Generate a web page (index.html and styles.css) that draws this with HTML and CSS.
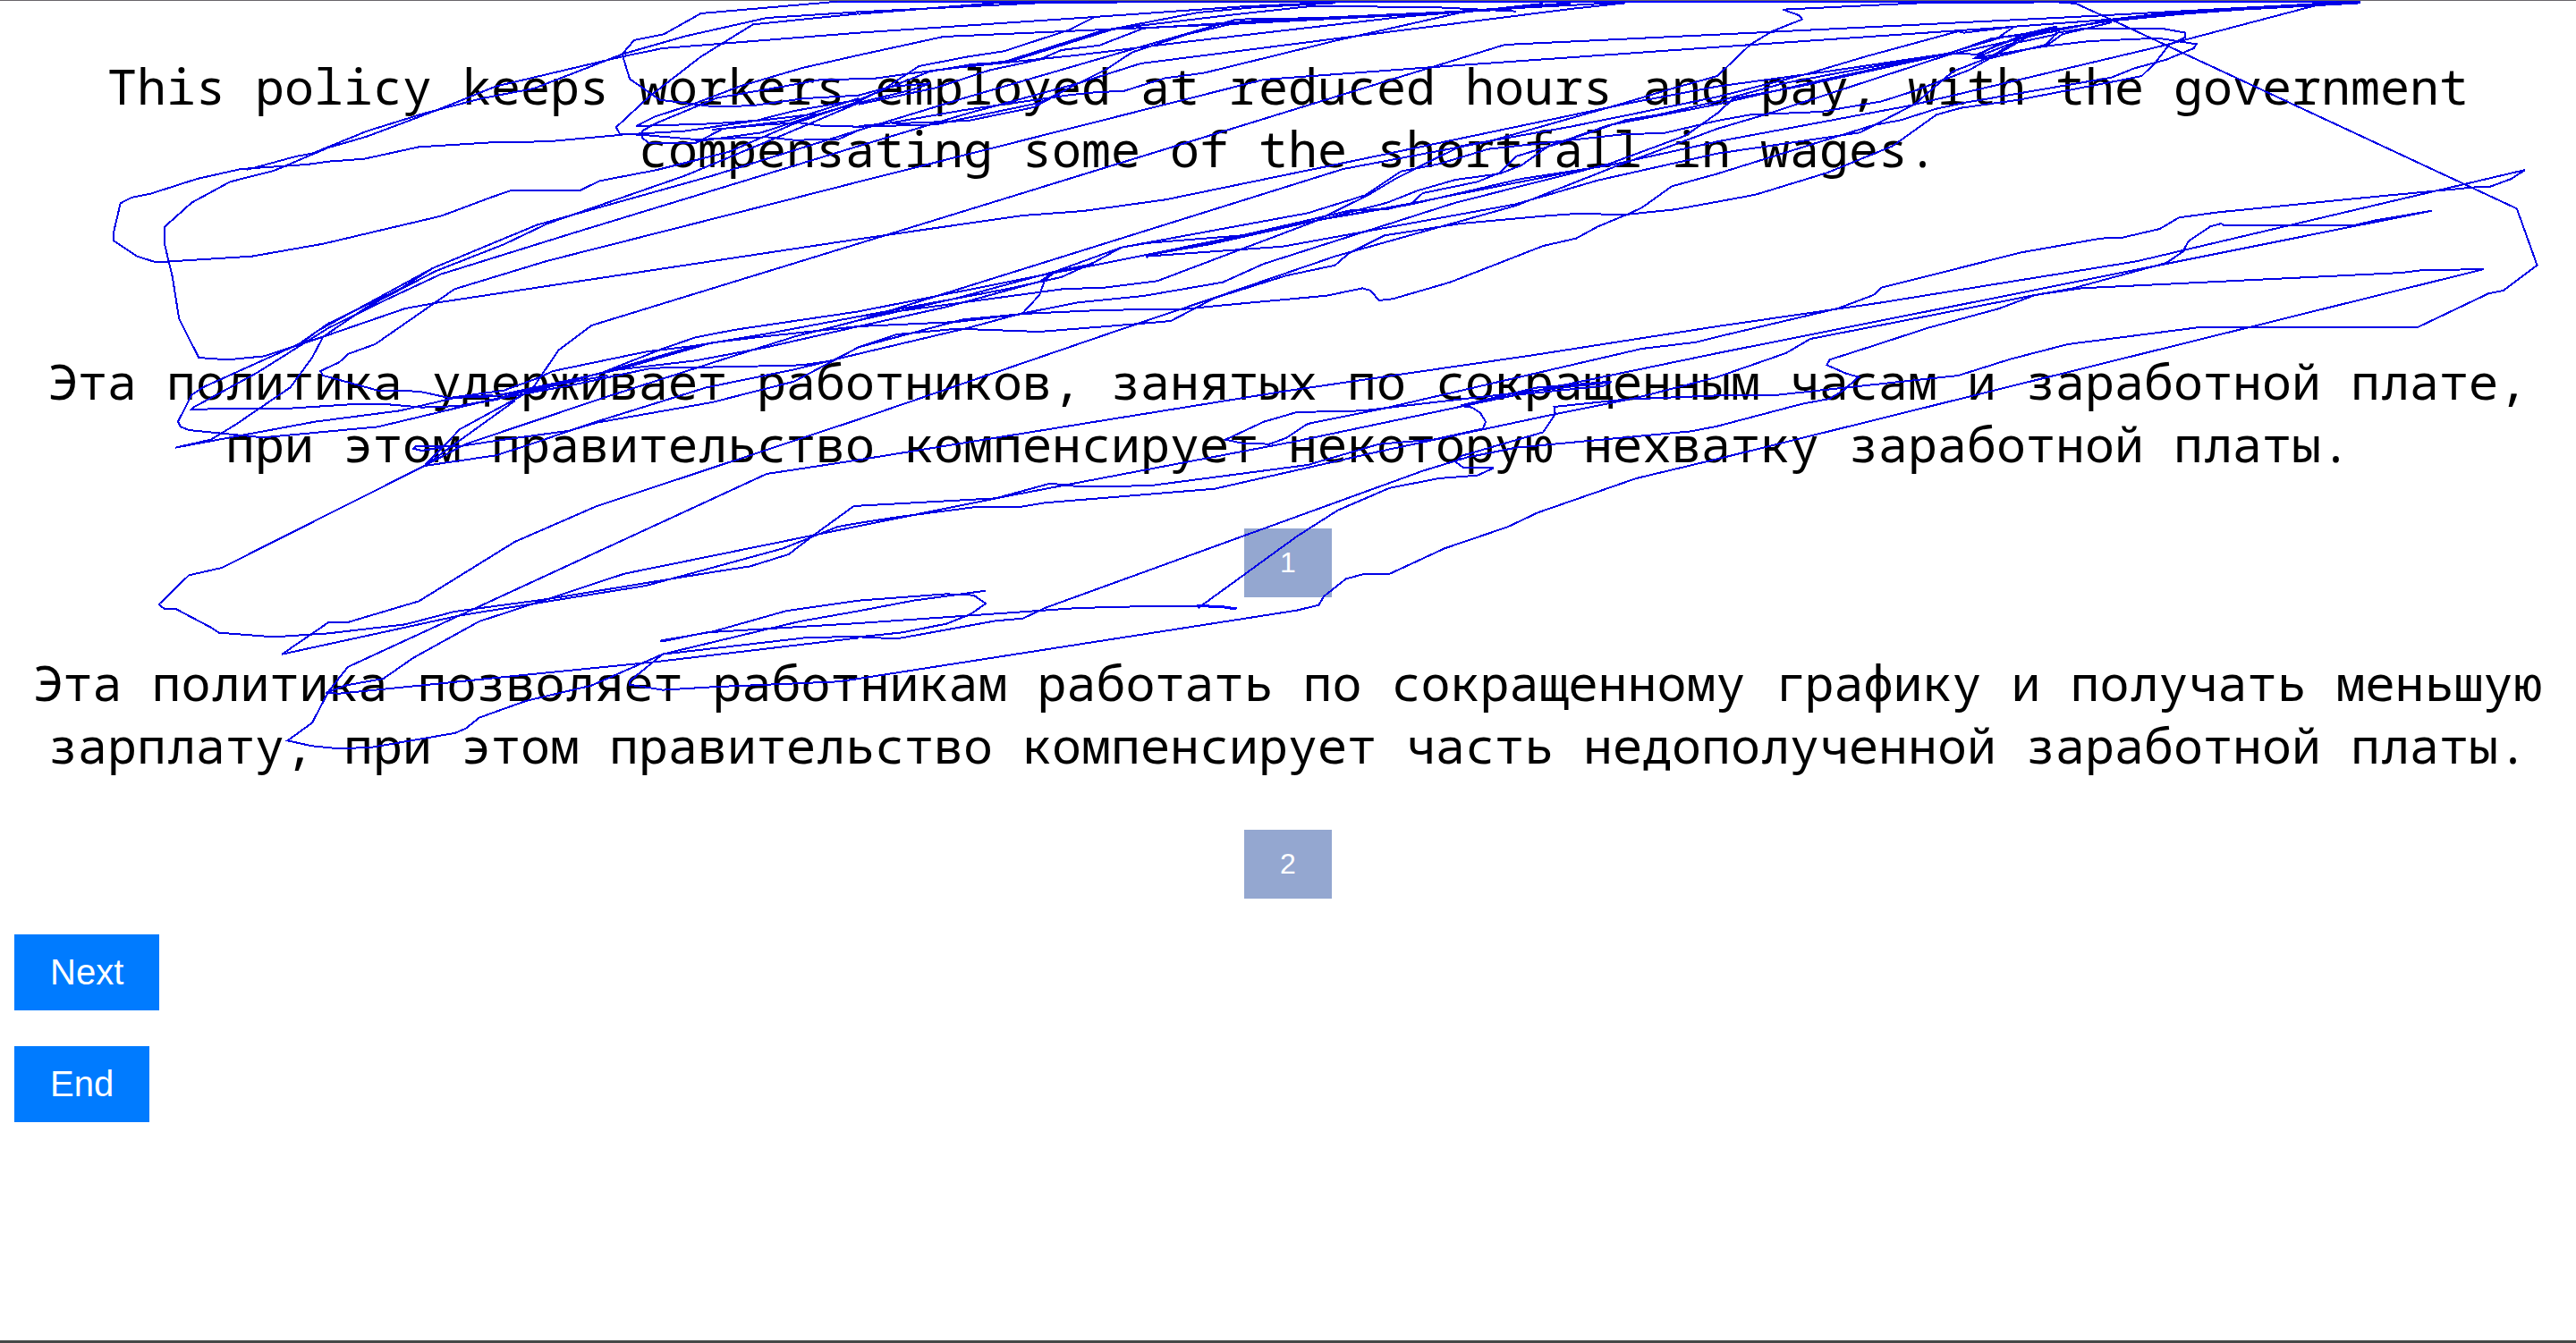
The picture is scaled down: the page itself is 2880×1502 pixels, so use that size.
FILE: index.html
```html
<!DOCTYPE html>
<html lang="ru">
<head>
<meta charset="utf-8">
<title>Translation choice</title>
<link rel="stylesheet" href="styles.css">
</head>
<body>
<main class="page">
  <p class="sentence" lang="en">This policy keeps workers employed at reduced hours and pay, with the government compensating some of the shortfall in wages.</p>
  <section class="option">
    <p class="sentence">Эта политика удерживает работников, занятых по сокращенным часам и заработной плате, при этом правительство компенсирует некоторую нехватку заработной платы.</p>
    <button class="choice" type="button">1</button>
  </section>
  <section class="option">
    <p class="sentence">Эта политика позволяет работникам работать по сокращенному графику и получать меньшую зарплату, при этом правительство компенсирует часть недополученной заработной платы.</p>
    <button class="choice" type="button">2</button>
  </section>
  <nav class="actions">
    <button class="action" type="button">Next</button>
    <button class="action" type="button">End</button>
  </nav>
</main>
<svg class="trace" viewBox="0 0 4704 4506" preserveAspectRatio="none" aria-hidden="true">
  <!-- left third -->
  <g>
    <polyline points="1568,5 1530,5 1280,45 1212,115 1158,135 1136,182 1150,265 1205,335 1300,357 1372,355 1470,330 1568,320"/>
    <polyline points="1568,40 1400,60 1250,122 1136,182 975,297 880,330 775,380 670,440 570,515 540,525 450,570"/>
    <polyline points="1568,46 1375,82 1280,190 1185,325 1125,427 1132,450 1170,452 1270,468 1400,460 1450,470 1530,468 1568,437"/>
    <polyline points="1568,110 1210,162 1136,190 905,290 800,368 670,458 600,495 500,573 420,610 350,680 300,762 300,815 315,930 327,1070 363,1200 415,1207 483,1195 590,1130 740,1035 800,1015 1568,802"/>
    <polyline points="1132,453 1000,475 905,477 765,493 665,533 600,542 560,552 440,567 360,600 275,650 240,663 220,682 208,775 208,808 250,860 285,880 460,860 590,818 805,725 900,660 935,638 1060,638 1095,607 1200,570 1330,510 1450,415 1568,340"/>
    <polyline points="1568,185 1465,228 1350,290 1265,350 1195,392 1162,423 1300,415 1400,402 1490,382"/>
    <polyline points="1568,265 1500,267 1400,300 1310,328 1200,412 1172,440 1172,462 1185,480 1270,480 1320,432 1440,405 1568,330"/>
    <polyline points="1132,452 1250,440 1380,405 1450,372 1568,335"/>
    <polyline points="1270,475 1390,445 1490,385 1568,345"/>
    <polyline points="1568,425 1500,422 1460,412 1400,418 1300,435"/>
    <polyline points="1568,345 1440,445 1250,590 1070,705 1000,750 920,820 795,910 670,1030 590,1130 570,1200 530,1300 430,1425 385,1475 320,1502 575,1415 730,1378 830,1335 900,1325"/>
    <polyline points="1568,437 1300,590 980,755 790,900 730,970 600,1085 545,1155 370,1300 350,1325 325,1415 330,1432 345,1443 480,1468 690,1432 770,1397 900,1340 1100,1250 1270,1160"/>
    <polyline points="1568,490 1300,640 1050,780 805,920 700,1010 600,1100 470,1250 355,1365 350,1373 530,1370 655,1355 710,1357 770,1367 840,1362 910,1340"/>
    <polyline points="790,900 670,1020 580,1110 545,1160"/>
    <polyline points="1568,610 1350,712 1000,875 830,970 685,1155 635,1188 620,1215 585,1245 590,1260 690,1310 765,1313 820,1335 900,1330 1110,1260"/>
    <polyline points="1568,817 1080,1092 1020,1175 970,1310 840,1440 775,1563"/>
    <polyline points="1568,1045 1340,1107 1270,1132 1210,1170 1100,1250 960,1320"/>
    <polyline points="1568,1062 1400,1120 1270,1160 1180,1180 1010,1245 980,1270 920,1310 820,1335"/>
    <polyline points="1568,1075 1450,1130 1330,1200 1110,1330 850,1490 775,1563"/>
    <polyline points="1568,1095 1400,1165 1270,1210 1130,1240 900,1330"/>
    <polyline points="1568,1095 1390,1130 1300,1150 1130,1240"/>
    <polyline points="1568,1165 1520,1210 1465,1225 1350,1230 1190,1235 1050,1290 830,1365"/>
    <polyline points="1568,1187 1450,1240 1290,1300 1080,1420 970,1490 905,1528 775,1563"/>
    <polyline points="1568,1165 1450,1280 1300,1350 1090,1418 1040,1445 920,1475 840,1497 760,1497 755,1505 770,1512 810,1500"/>
    <polyline points="1568,1407 1090,1698 940,1818 765,2017 635,2088 600,2088 515,2195 840,2065 1180,1965 1430,1840 1530,1767 1568,1755"/>
    <polyline points="940,1345 775,1563 405,1905 345,1930 290,2028 300,2042 320,2042 385,2105 400,2123 500,2137 600,2125 740,2095 830,2052 1000,2010 1200,1950 1300,1920 1370,1900 1440,1860 1490,1790 1560,1697 1568,1697"/>
    <polyline points="1568,1543 1400,1590 635,2238 600,2320 570,2425 525,2485 570,2503 620,2512 680,2507 830,2460 850,2445 875,2408 960,2352 1080,2300 1210,2195 1460,2085 1568,2050"/>
    <polyline points="1568,1765 1140,1925 1000,2010 875,2085 755,2207 700,2277 630,2300 595,2325 620,2327 1200,2220 1568,2140"/>
    <polyline points="1568,2015 1435,2050 1300,2120 1205,2150 1215,2150 1290,2122 1568,2091"/>
    <polyline points="1568,2135 1470,2140 1210,2195 1150,2285 1150,2297 1210,2315 1300,2305 1530,2287 1568,2277"/>
  </g>
  <!-- middle third -->
  <g transform="translate(1568 0)">
    <polyline class="edge" points="-40,3 2740,3"/>
    <polyline points="0,40 350,8 800,5"/>
    <polyline points="0,47 250,10 700,5"/>
    <polyline points="0,110 430,57 700,22 850,10"/>
    <polyline points="430,58 385,100 265,172 200,190 110,222 45,300 0,340"/>
    <polyline points="0,185 155,123 500,95 690,80 1050,45 1300,15"/>
    <polyline points="0,335 60,290 130,240 210,215 270,210 470,95 620,42 720,25 870,10"/>
    <polyline points="0,320 60,290 130,280 100,300 0,345"/>
    <polyline points="0,350 140,295 240,235 330,200 370,168 440,152 520,95 690,75 1050,45"/>
    <polyline points="0,265 30,263 100,245 190,225 400,185 590,142 1000,55 1170,30 1400,8"/>
    <polyline points="130,238 270,205 450,100 690,48 830,20 1060,25 1200,38"/>
    <polyline points="0,437 200,325 500,165 690,65 850,60 1150,35 1300,12"/>
    <polyline points="0,425 140,418 330,345 450,235 500,175 600,115 700,72 1100,38 1300,10"/>
    <polyline points="0,423 50,415 190,370 380,320 430,310 485,305 560,262 630,245 870,137 1100,42 1250,12"/>
    <polyline points="0,490 200,380 400,280 515,213 870,130 1300,30 1400,10"/>
    <polyline points="60,415 200,405 320,360 380,300"/>
    <polyline points="0,610 740,267 1050,225 1568,158"/>
    <polyline points="0,817 1180,150 1568,116"/>
    <polyline points="0,802 300,723 410,708 560,670 890,545 1410,345 1568,290"/>
    <polyline points="0,1075 885,567 1150,475 1390,350 1480,300 1568,255"/>
    <polyline points="0,1045 350,918 430,890 850,735 1010,685 1210,600 1370,555 1568,475"/>
    <polyline points="0,1062 270,970 370,930 430,880 480,830 530,815 700,790 820,745 1010,682 1320,570"/>
    <polyline points="0,1075 180,1000 360,910 480,830 820,715 925,655 990,575 1060,550 1150,500 1400,450 1470,447 1568,405"/>
    <polyline points="0,1062 380,968 440,967 545,943 830,745 930,655 980,600 1050,535 1100,490 1300,425 1568,325"/>
    <polyline points="0,1095 180,1080 300,1053 450,1040 590,1038 660,1025 855,992 920,967 935,975 950,1008 975,1003 1080,947 1250,825 1310,800 1350,760 1405,718 1430,697 1485,625 1568,583"/>
    <polyline points="0,1095 160,1030 330,945 360,910 430,885"/>
    <polyline points="0,1165 190,1072 290,1055 400,1015 520,993 665,947 740,885 1090,680 1370,550 1510,455 1568,380"/>
    <polyline points="0,1165 70,1122 180,1103 330,1113 520,1085 570,1077 650,1000 780,925 870,890 895,850 960,790 1100,750 1250,725 1310,717 1400,720 1490,703 1568,677"/>
    <polyline points="0,1187 200,1100 300,1050 330,990 340,940 360,910 430,890"/>
    <polyline points="525,865 530,857 700,790 900,705 965,702 1010,682 1030,648 1130,610 1170,580 1200,525 1280,480 1400,403 1460,385 1568,340"/>
    <polyline points="525,860 775,827 1200,685 1350,605 1568,515"/>
    <polyline points="530,855 640,820 860,730 965,680 1020,640 1090,603 1170,583 1210,555 1260,490 1370,420 1568,350"/>
    <polyline points="0,1407 500,1092 640,1005 870,860 1200,690 1380,560 1568,432"/>
    <polyline points="0,1543 780,1312 1230,1192 1568,1095"/>
    <polyline points="0,1697 250,1672 350,1622 400,1632 530,1630 820,1560 950,1490 1050,1475 1140,1438 1145,1415 1135,1385 1120,1367 1100,1362 1200,1325 1360,1295 1375,1280 1240,1300 1100,1360"/>
    <polyline points="0,1765 270,1665 800,1480 1240,1310 1568,1185"/>
    <polyline points="0,1755 70,1735 210,1702 290,1702 340,1687 650,1640 950,1515 1270,1390 1420,1335 1568,1265"/>
    <polyline points="1375,1282 1050,1350 920,1378 800,1383 740,1415 670,1475 700,1487 750,1490 780,1470 820,1422 960,1370 1430,1170 1530,1148 1568,1130"/>
    <polyline points="1568,1327 1400,1340 1270,1365 1272,1390 1250,1450 1100,1530 1090,1550 1105,1570 1160,1570 1130,1595 1060,1605 970,1637 875,1712 800,1800 620,2040"/>
    <polyline class="edge" points="618,2033 660,2035 690,2043"/>
    <polyline points="620,2033 550,2033 400,2040 0,2091"/>
    <polyline points="1568,1430 1520,1447 1200,1502 1110,1535 1030,1580 880,1680 340,2040 300,2075 250,2083 70,2143 0,2137"/>
    <polyline points="1568,1540 1420,1605 1240,1720 1185,1768 1070,1840 970,1925 925,1925 890,1942 850,2000 840,2030 800,2048 0,2277"/>
    <polyline points="0,2015 160,1993 210,1997 232,2025 205,2060 160,2093 80,2122 0,2137"/>
    <polyline points="0,2050 100,2015 232,1982"/>
  </g>
  <!-- right third -->
  <g transform="translate(3136 0)">
    <polyline points="0,116 650,57 1175,5"/>
    <polyline points="0,158 500,95 720,65 1100,12 1175,8"/>
    <polyline points="0,255 20,220 60,150 100,105 155,65 150,52 120,32 370,10 620,7 655,12 730,75 1460,700 1497,890 1435,975 1408,985 1280,1097 885,1097 640,1155 535,1205 440,1260 110,1325 0,1327"/>
    <polyline points="0,290 200,240 420,180 510,130 540,92"/>
    <polyline points="0,325 170,245 270,190 440,105 450,110 540,90"/>
    <polyline points="0,340 120,280 250,235 420,180 475,182 560,115 620,90"/>
    <polyline points="0,350 200,265 430,175 500,130 720,70 900,38 1150,5"/>
    <polyline points="0,380 30,330 150,290 410,185 520,125 620,105"/>
    <polyline points="0,405 60,385 190,375 300,340 360,305 460,235 580,110 620,95"/>
    <polyline points="0,432 90,383 420,185 600,110 720,65 800,48 1175,10"/>
    <polyline points="0,475 350,355 810,155 1110,10"/>
    <polyline points="0,515 260,445 360,350 430,240 500,190 570,110 620,88"/>
    <polyline points="0,583 285,420 335,403 400,365 450,345 720,260 760,230 820,200 870,162 875,148 805,128 680,138 600,155 550,170 470,195 530,150 620,115"/>
    <polyline points="0,677 70,653 200,580 320,490 400,385 445,362 550,335 720,275 775,255 800,210 825,150 855,125 855,110 810,95 670,95 620,110 600,150 500,195 470,195 500,160 580,110"/>
    <polyline points="600,155 630,115 720,75"/>
    <polyline points="0,1095 300,1015 765,877 1475,570 1450,600 1410,627 1390,627 1200,660 915,712 843,730 808,768 740,797 700,800 555,847 300,965 285,990 220,1035 0,1130"/>
    <polyline points="0,1185 820,885 1160,760 1305,707 1200,740 1160,757 925,757 920,750 900,760 860,810 850,845 820,882 650,967 580,990 515,1035 385,1100 285,1160 205,1207 200,1225 235,1253 258,1265 230,1310 205,1338 155,1355 0,1430"/>
    <polyline points="0,1265 125,1185 170,1137 580,990 665,967 1250,915 1285,907 1400,903 780,1185 0,1540"/>
  </g>
</svg>
</body>
</html>
```
FILE: styles.css
```css
* {
  box-sizing: border-box;
}

body {
  position: relative;
  margin: 0;
  min-height: 100vh;
  display: flex;
  flex-direction: column;
  border-top: 1px solid #68656a;
  border-bottom: 3px solid #454847;
  background: #fff;
  color: #000;
}

.page {
  padding: 60px 16px 0;
}

.sentence {
  margin: 0;
  font-family: Consolas, "Noto Sans Mono", "Liberation Mono", monospace;
  font-size: 55px;
  line-height: 70px;
  text-align: center;
}

.option {
  display: flex;
  flex-direction: column;
  align-items: center;
  gap: 60px;
  margin-bottom: 60px;
}

.sentence + .option {
  margin-top: 190px;
}

button {
  border: 0;
  color: #fff;
  font-family: Arial, "Liberation Sans", sans-serif;
}

.choice {
  padding: 20px 40px;
  background: #94a7d0;
  font-size: 32px;
  line-height: 37px;
}

.actions {
  display: flex;
  flex-direction: column;
  align-items: flex-start;
  gap: 40px;
  margin-top: -20px;
}

.action {
  padding: 20px 40px;
  background: #007bff;
  font-size: 40px;
  line-height: 45px;
}

.trace {
  position: absolute;
  top: -1px;
  left: 0;
  width: 100%;
  height: 100vh;
  pointer-events: none;
}

.trace polyline {
  fill: none;
  stroke: #0000e6;
  stroke-width: 2;
  vector-effect: non-scaling-stroke;
  shape-rendering: crispEdges;
}

.trace .edge {
  stroke: #00f;
  stroke-width: 3;
}
```
